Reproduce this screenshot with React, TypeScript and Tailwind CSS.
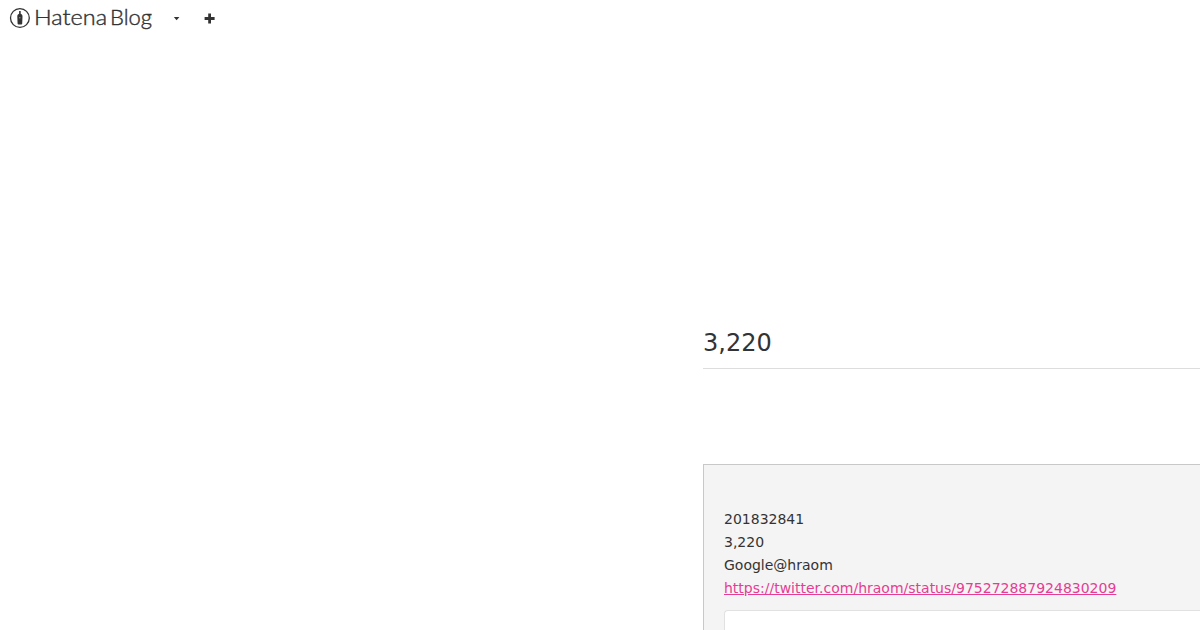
import type { ReactNode } from 'react';

const TWEET_URL = 'https://twitter.com/hraom/status/975272887924830209';

const entryLines = ['201832841', '3,220', 'Google@hraom'];

function HatenaBlogLogo() {
  return (
    <svg width="145" height="34" viewBox="0 -5 145 34" role="img" aria-label="Hatena Blog">
      <circle cx="10.9" cy="12" r="9.4" fill="none" stroke="#333333" strokeWidth="1.3" />
      <path
        d="M10.1 5h1.6v2.8c1.2.6 1.8 1.4 1.8 2.6l-.3 7.4c0 .5-.4.8-.9.8H9.5c-.5 0-.9-.3-.9-.8l-.3-7.4c0-1.200.6-2 1.8-2.6z"
        fill="#333333"
      />
      <circle cx="10.9" cy="11.7" r="0.5" fill="#ffffff" />
      <g
        fill="#333333"
        stroke="#333333"
        strokeWidth="0.4"
        fontFamily="Lato, sans-serif"
        fontWeight="300"
        fontSize="21"
      >
        <text x="25" y="19.3" textLength="73" lengthAdjust="spacingAndGlyphs">Hatena</text>
        <text x="101" y="19.3" textLength="42" lengthAdjust="spacingAndGlyphs">Blog</text>
      </g>
    </svg>
  );
}

function GlobalHeader() {
  return (
    <header className="flex h-9 items-center pl-[9px]">
      <a href="#" className="block">
        <HatenaBlogLogo />
      </a>
      <button className="ml-[19px]" aria-label="Menu">
        <svg width="7" height="6" viewBox="0 0 7 6">
          <path d="M0.8 2h5.6L3.6 5.300z" fill="#333333" />
        </svg>
      </button>
      <button className="ml-[24px]" aria-label="New entry">
        <svg width="12" height="12" viewBox="0 0 12 12">
          <path d="M4.2 1.5h2.8v3.6h3.6v2.8h-3.6v3.6h-2.8v-3.6h-3.6v-2.8h3.6z" fill="#333333" />
        </svg>
      </button>
    </header>
  );
}

function EntryBox({ children }: { children: ReactNode }) {
  return (
    <div className="mt-[95px] h-[166px] border-t border-l border-[#c8c8c8] bg-[#f4f4f4] pt-[43px] pl-5 text-sm leading-[23px]">
      {children}
    </div>
  );
}

export default function App() {
  return (
    <div className="h-[630px] w-[1200px] overflow-hidden bg-white font-['DejaVu_Sans',sans-serif] text-[#333333]">
      <GlobalHeader />

      <main className="ml-[703px] pt-[289px]">
        <h1 className="h-11 border-b border-[#dddddd] text-2xl leading-[36px]">3,220</h1>

        <EntryBox>
          {entryLines.map((line) => (
            <p key={line}>{line}</p>
          ))}
          <p>
            <a href={TWEET_URL} className="text-[#e53d93] underline">
              {TWEET_URL}
            </a>
          </p>
          {/* Embedded tweet card */}
          <div className="mt-[10px] h-10 rounded-tl-[4px] border-t border-l border-[#e1e1e1] bg-white" />
        </EntryBox>
      </main>
    </div>
  );
}
